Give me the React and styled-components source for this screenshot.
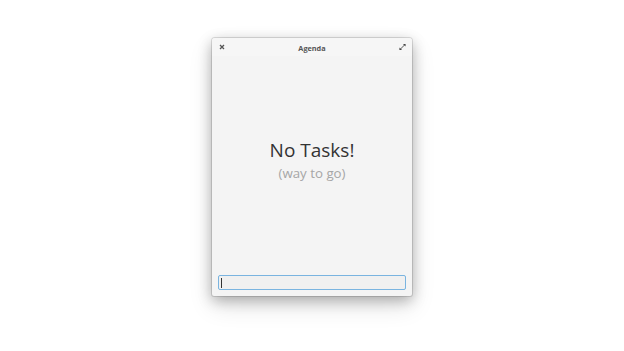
import React from "react";
import styled, { createGlobalStyle } from "styled-components";

const Global = createGlobalStyle`
  html, body { margin: 0; padding: 0; background: #ffffff; }
  body { font-family: "Open Sans", "Noto Sans", sans-serif; }
`;

const Page = styled.div`
  width: 624px;
  height: 351px;
  display: flex;
  justify-content: center;
  padding-top: 38px;
  box-sizing: border-box;
`;

const Window = styled.div`
  width: 200px;
  height: 258px;
  background: #f4f4f4;
  border-radius: 3px 3px 2px 2px;
  box-shadow: 0 0 0 1px rgba(0,0,0,0.12), 0 4px 14px rgba(0,0,0,0.28), 0 10px 24px rgba(0,0,0,0.12);
  display: flex;
  flex-direction: column;
`;

const TitleBar = styled.div`
  height: 18px;
  display: flex;
  align-items: center;
  justify-content: space-between;
  padding: 0 6px 0 6px;
  box-sizing: border-box;
  background: #f6f6f6;
  border-radius: 3px 3px 0 0;
`;

const Title = styled.div`
  font-size: 7.3px;
  font-weight: 700;
  color: #555555;
  padding-top: 1px;
`;

const IconBtn = styled.div`
  width: 7px;
  height: 7px;
  display: flex;
  align-items: center;
  justify-content: center;
`;

const Content = styled.div`
  flex: 1;
  display: flex;
  flex-direction: column;
  align-items: center;
  justify-content: center;
  padding-bottom: 12px;
`;

const Heading = styled.div`
  font-size: 19px;
  color: #333333;
  line-height: 22px;
`;

const Sub = styled.div`
  font-size: 13.3px;
  color: #a6a6a6;
  line-height: 16px;
  margin-top: 4px;
`;

const Footer = styled.div`
  padding: 0 6px 6px 6px;
`;

const Entry = styled.div`
  height: 15px;
  border: 1px solid #7ab4e0;
  background: #f0f0f0;
  border-radius: 2px;
  box-sizing: border-box;
  display: flex;
  align-items: center;
  padding-left: 2px;
`;

const Caret = styled.div`
  width: 1px;
  height: 10px;
  background: #333;
`;

export default function App() {
  return (
    <>
      <Global />
      <Page>
        <Window>
          <TitleBar>
            <IconBtn>
              <svg width="6" height="6" viewBox="0 0 6 6">
                <path d="M1 1 L5 5 M5 1 L1 5" stroke="#555" strokeWidth="1.3" />
              </svg>
            </IconBtn>
            <Title>Agenda</Title>
            <IconBtn>
              <svg width="8" height="8" viewBox="0 0 8 8">
                <path d="M4.5 0.5 H7.5 V3.5 Z" fill="#444" />
                <path d="M3.5 7.5 H0.5 V4.5 Z" fill="#444" />
                <path d="M6.5 1.5 L1.5 6.5" stroke="#444" strokeWidth="1" />
              </svg>
            </IconBtn>
          </TitleBar>
          <Content>
            <Heading>No Tasks!</Heading>
            <Sub>(way to go)</Sub>
          </Content>
          <Footer>
            <Entry>
              <Caret />
            </Entry>
          </Footer>
        </Window>
      </Page>
    </>
  );
}
